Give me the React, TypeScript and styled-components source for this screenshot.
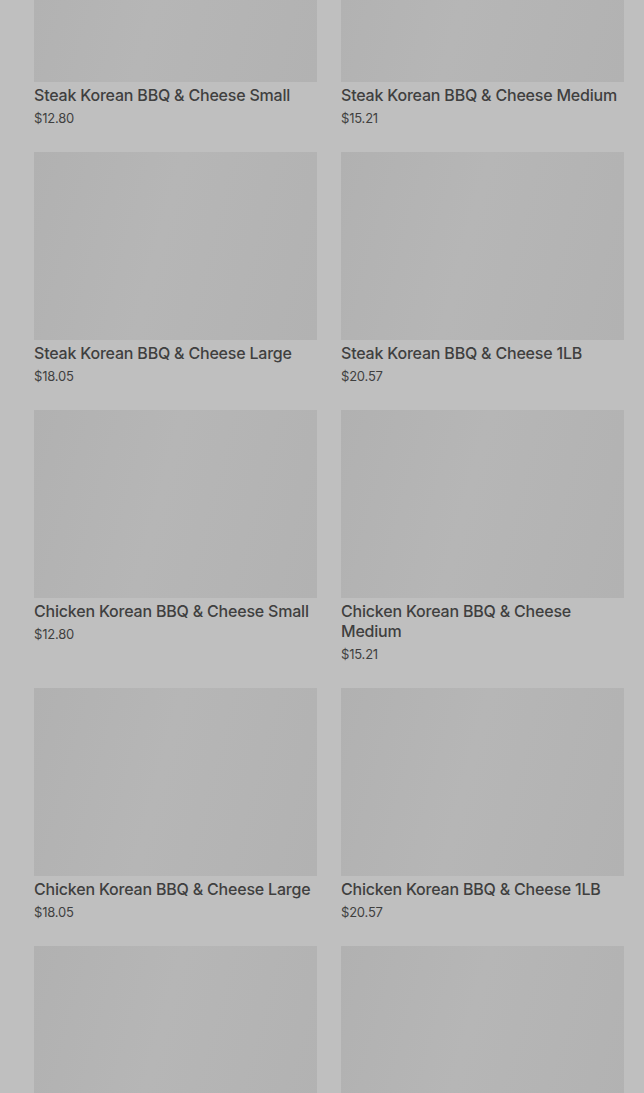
import React from "react";
import styled, { createGlobalStyle } from "styled-components";

const Global = createGlobalStyle`
  html, body { margin: 0; padding: 0; background: #bfbfbf; }
  body { overflow: hidden; font-family: "Inter", "Liberation Sans", sans-serif; }
`;

const Page = styled.div`
  width: 644px;
  height: 1093px;
  overflow: hidden;
  background: #bfbfbf;
`;

const Grid = styled.div`
  display: grid;
  grid-template-columns: 283px 283px;
  column-gap: 24px;
  row-gap: 24px;
  align-items: start;
  padding: 0 20px 0 34px;
  margin-top: -106px;
`;

const Card = styled.div`
  display: flex;
  flex-direction: column;
`;

const Thumb = styled.div`
  height: 188px;
  background: linear-gradient(105deg, #b1b1b1 0%, #b6b6b6 45%, #b2b2b2 100%);
`;

const Title = styled.div`
  margin-top: 3px;
  font-size: 16px;
  line-height: 20px;
  font-weight: 500;
  color: #3f3f3f;
  letter-spacing: -0.2px;
`;

const Price = styled.div`
  margin-top: 3px;
  font-size: 13px;
  line-height: 20px;
  color: #3f3f3f;
  letter-spacing: -0.2px;
`;

const items = [
  ["Steak Korean BBQ & Cheese Small", "$12.80"],
  ["Steak Korean BBQ & Cheese Medium", "$15.21"],
  ["Steak Korean BBQ & Cheese Large", "$18.05"],
  ["Steak Korean BBQ & Cheese 1LB", "$20.57"],
  ["Chicken Korean BBQ & Cheese Small", "$12.80"],
  ["Chicken Korean BBQ & Cheese Medium", "$15.21"],
  ["Chicken Korean BBQ & Cheese Large", "$18.05"],
  ["Chicken Korean BBQ & Cheese 1LB", "$20.57"],
  ["Pork Korean BBQ & Cheese Small", "$12.80"],
  ["Pork Korean BBQ & Cheese Medium", "$15.21"],
];

export default function App() {
  return (
    <Page>
      <Global />
      <Grid>
        {items.map(([t, p], i) => (
          <Card key={i}>
            <Thumb />
            <Title>{t}</Title>
            <Price>{p}</Price>
          </Card>
        ))}
      </Grid>
    </Page>
  );
}
